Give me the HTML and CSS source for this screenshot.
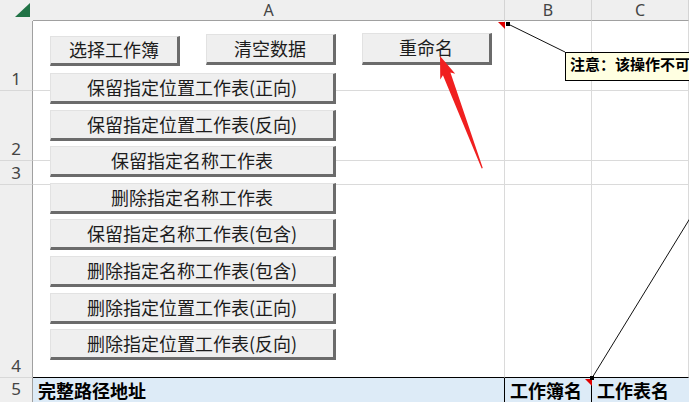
FILE: index.html
```html
<!DOCTYPE html>
<html lang="zh-CN">
<head>
<meta charset="utf-8">
<title>工作表工具</title>
<link rel="stylesheet" href="styles.css">
</head>
<body>
<div class="sheet">
  <div class="corner">
    <svg class="corner-tri" width="33" height="21" viewBox="0 0 33 21"><polygon points="15,17 30,17 30,3" fill="#217346"/></svg>
  </div>
  <div class="colhead">A</div>
  <div class="colhead">B</div>
  <div class="colhead">C</div>

  <div class="rowhead">1</div><div class="cell"></div><div class="cell"></div><div class="cell"></div>
  <div class="rowhead">2</div><div class="cell"></div><div class="cell"></div><div class="cell"></div>
  <div class="rowhead">3</div><div class="cell"></div><div class="cell"></div><div class="cell"></div>
  <div class="rowhead">4</div><div class="cell last"></div><div class="cell last"></div><div class="cell last"></div>
  <div class="rowhead top">5</div>
  <div class="cell title">完整路径地址</div>
  <div class="cell title">工作簿名</div>
  <div class="cell title end">工作表名</div>
</div>

<div class="controls">
  <div class="toprow">
    <div class="btn small first">选择工作簿</div>
    <div class="btn small">清空数据</div>
    <div class="btn small third">重命名</div>
  </div>
  <div class="btn wide">保留指定位置工作表(正向)</div>
  <div class="btn wide">保留指定位置工作表(反向)</div>
  <div class="btn wide">保留指定名称工作表</div>
  <div class="btn wide">删除指定名称工作表</div>
  <div class="btn wide">保留指定名称工作表(包含)</div>
  <div class="btn wide">删除指定名称工作表(包含)</div>
  <div class="btn wide">删除指定位置工作表(正向)</div>
  <div class="btn wide">删除指定位置工作表(反向)</div>
</div>

<div class="comment">注意：该操作不可逆，请先备份</div>

<svg class="annot" width="689" height="402" viewBox="0 0 689 402">
  <polygon points="498,22 505,22 505,29" fill="#e00000"/>
  <line x1="508" y1="24" x2="565" y2="52" stroke="#111" stroke-width="1"/>
  <rect x="506" y="22" width="4" height="4" fill="#000"/>
  <polygon points="585,379 592,379 592,386" fill="#e00000"/>
  <line x1="700" y1="202" x2="592" y2="378" stroke="#111" stroke-width="1"/>
  <rect x="590" y="376" width="4" height="4" fill="#000"/>
  <g transform="translate(440,56) rotate(-20.6)">
    <polygon points="0,0 8,22 4,19 0.6,120 -0.6,120 -4,19 -8,22" fill="#f02020"/>
  </g>
</svg>
</body>
</html>
```
FILE: styles.css
```css
html, body {
  margin: 0;
  padding: 0;
  width: 689px;
  height: 402px;
  overflow: hidden;
  background: #ffffff;
  font-family: "Noto Sans CJK SC", "Noto Sans", sans-serif;
}

.sheet {
  display: grid;
  grid-template-columns: 33px 472px 87px 1fr;
  grid-template-rows: 21px 70px 70px 24px 193px 1fr;
  width: 689px;
  height: 402px;
}

.corner {
  background: #efefef;
}

.corner-tri {
  display: block;
}

.colhead {
  background: #efefef;
  border-bottom: 1px solid #a0a0a0;
  border-right: 1px solid #d4d4d4;
  box-sizing: border-box;
  color: #444;
  font-family: "Noto Sans", sans-serif;
  font-size: 16px;
  line-height: 20px;
  text-align: center;
}

.rowhead {
  background: #efefef;
  border-right: 1px solid #a0a0a0;
  border-bottom: 1px solid #d8d8d8;
  box-sizing: border-box;
  color: #444;
  font-family: "Noto Sans", sans-serif;
  font-size: 17px;
  line-height: 20px;
  text-align: center;
  display: flex;
  align-items: flex-end;
  justify-content: center;
  padding-bottom: 1px;
}

.rowhead.top {
  align-items: flex-start;
  padding-top: 1px;
  border-bottom: none;
}

.cell {
  border-right: 1px solid #dadada;
  border-bottom: 1px solid #dadada;
  box-sizing: border-box;
}

.cell.last {
  border-bottom-color: #000;
}

.cell.title {
  background: #ddebf7;
  border-right-color: #000;
  border-bottom: none;
  font-weight: bold;
  font-size: 18px;
  line-height: 22px;
  padding: 1px 0 0 5px;
  color: #000;
  white-space: nowrap;
  overflow: hidden;
}

.cell.title.end {
  border-right: none;
}

.controls {
  position: absolute;
  left: 50px;
  top: 34px;
  display: flex;
  flex-direction: column;
  gap: 5.6px;
}

.toprow {
  display: flex;
  align-items: flex-start;
  gap: 26px;
  margin-bottom: 2.4px;
  height: 31px;
}

.btn {
  box-sizing: border-box;
  height: 31px;
  background: #efefef;
  border-top: 1px solid #e2e2e2;
  border-left: 1px solid #e2e2e2;
  border-right: 3px solid #6b6b6b;
  border-bottom: 3px solid #6b6b6b;
  color: #1c1c1c;
  font-size: 18px;
  line-height: 26px;
  text-align: center;
  white-space: nowrap;
}

.btn.small {
  width: 130px;
}

.btn.small.first {
  margin-top: 2px;
  height: 30px;
  line-height: 25px;
}

.btn.small.third {
  margin-top: -1px;
  height: 32px;
  line-height: 27px;
}

.btn.wide {
  width: 286px;
}

.comment {
  position: absolute;
  left: 565px;
  top: 52px;
  width: 200px;
  height: 29px;
  box-sizing: border-box;
  background: #ffffe1;
  border: 1px solid #000;
  font-size: 15px;
  font-weight: bold;
  line-height: 20px;
  padding: 1px 0 0 4px;
  white-space: nowrap;
  overflow: hidden;
  color: #000;
}

.annot {
  position: absolute;
  left: 0;
  top: 0;
  pointer-events: none;
}
```
